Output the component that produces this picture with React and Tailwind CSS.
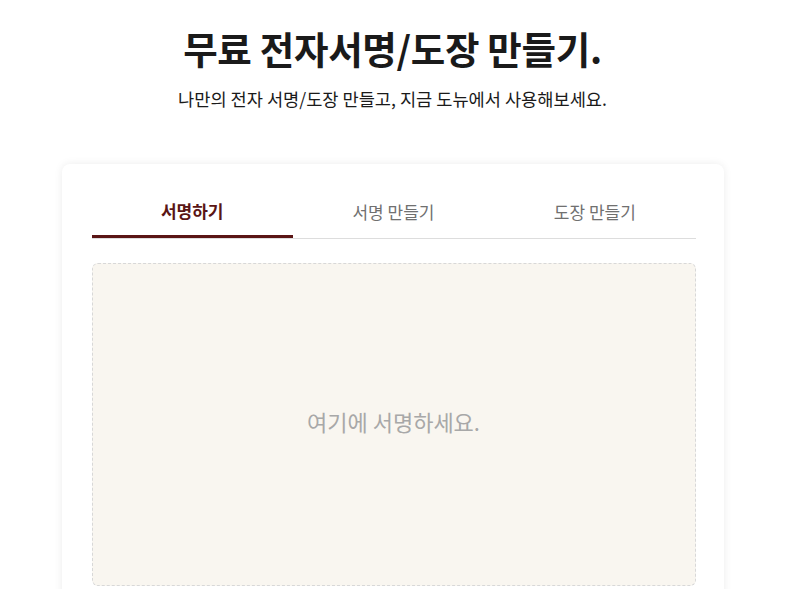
export default function App() {
  const font = { fontFamily: '"Noto Sans CJK KR", "Noto Sans", sans-serif' };
  return (
    <div className="min-h-[589px] bg-white w-[785px] flex flex-col items-center" style={font}>
      <h1 className="mt-[24px] text-[37.5px] leading-[48px] font-bold text-[#1a1a1a] tracking-[-0.3px]">
        무료 전자서명/도장 만들기.
      </h1>
      <p className="mt-[14px] text-[17.6px] leading-[26px] text-[#1a1a1a]">
        나만의 전자 서명/도장 만들고, 지금 도뉴에서 사용해보세요.
      </p>
      <div className="mt-[52px] w-[662px] bg-white rounded-[8px] shadow-[0_0_8px_rgba(0,0,0,0.08)] pl-[30px] pr-[28px] pt-[22px] pb-[40px]">
        <div className="flex border-b border-[#dddddd]">
          <div className="flex-1 h-[52px] flex items-center justify-center text-[17px] font-bold text-[#5a1515] border-b-[3px] border-[#5a1515] -mb-[1px]">
            서명하기
          </div>
          <div className="flex-1 h-[52px] flex items-center justify-center text-[17px] text-[#707070]">
            서명 만들기
          </div>
          <div className="flex-1 h-[52px] flex items-center justify-center text-[17px] text-[#707070]">
            도장 만들기
          </div>
        </div>
        <div className="mt-[24px] h-[323px] rounded-[6px] border border-dashed border-[#d8d8d8] bg-[#f9f6f0] flex items-center justify-center pb-[6px]">
          <span className="text-[22px] text-[#a8a8a8]">여기에 서명하세요.</span>
        </div>
      </div>
    </div>
  );
}
